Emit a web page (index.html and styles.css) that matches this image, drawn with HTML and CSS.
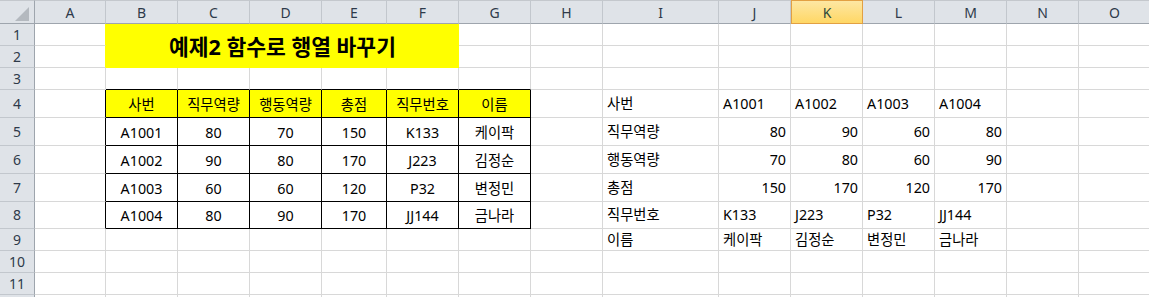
FILE: index.html
```html
<!DOCTYPE html>
<html lang="ko">
<head>
<meta charset="utf-8">
<title>예제2 함수로 행열 바꾸기</title>
<link rel="stylesheet" href="styles.css">
</head>
<body>
<div class="sheet">
  <!-- column headers -->
  <div class="corner"><svg width="34" height="23" viewBox="0 0 34 23"><polygon points="15,20 29,20 29,6" fill="#b4b9bf"/></svg></div>
  <div class="ch">A</div><div class="ch">B</div><div class="ch">C</div><div class="ch">D</div><div class="ch">E</div><div class="ch">F</div><div class="ch">G</div><div class="ch">H</div><div class="ch">I</div><div class="ch">J</div><div class="ch sel">K</div><div class="ch">L</div><div class="ch">M</div><div class="ch">N</div><div class="ch">O</div>

  <!-- row 1 -->
  <div class="rh">1</div>
  <div class="c fill-edge"></div>
  <div class="title">예제2 함수로 행열 바꾸기</div>
  <div class="c"></div><div class="c"></div><div class="c"></div><div class="c"></div><div class="c"></div><div class="c"></div><div class="c"></div><div class="c"></div><div class="c"></div>

  <!-- row 2 -->
  <div class="rh">2</div>
  <div class="c fill-edge"></div>
  <div class="c"></div><div class="c"></div><div class="c"></div><div class="c"></div><div class="c"></div><div class="c"></div><div class="c"></div><div class="c"></div><div class="c"></div>

  <!-- row 3 -->
  <div class="rh">3</div>
  <div class="c"></div>
  <div class="c top"></div><div class="c top"></div><div class="c top"></div><div class="c top"></div><div class="c top"></div><div class="c top"></div>
  <div class="c"></div><div class="c"></div><div class="c"></div><div class="c"></div><div class="c"></div><div class="c"></div><div class="c"></div><div class="c"></div>

  <!-- row 4 -->
  <div class="rh">4</div>
  <div class="c edge"></div>
  <div class="t th">사번</div><div class="t th">직무역량</div><div class="t th">행동역량</div><div class="t th">총점</div><div class="t th">직무번호</div><div class="t th">이름</div>
  <div class="c"></div>
  <div class="c v l">사번</div><div class="c v l">A1001</div><div class="c v l">A1002</div><div class="c v l">A1003</div><div class="c v l">A1004</div>
  <div class="c"></div><div class="c"></div>

  <!-- row 5 -->
  <div class="rh">5</div>
  <div class="c edge"></div>
  <div class="t">A1001</div><div class="t">80</div><div class="t">70</div><div class="t">150</div><div class="t">K133</div><div class="t">케이팍</div>
  <div class="c"></div>
  <div class="c v l">직무역량</div><div class="c v r">80</div><div class="c v r">90</div><div class="c v r">60</div><div class="c v r">80</div>
  <div class="c"></div><div class="c"></div>

  <!-- row 6 -->
  <div class="rh">6</div>
  <div class="c edge"></div>
  <div class="t">A1002</div><div class="t">90</div><div class="t">80</div><div class="t">170</div><div class="t">J223</div><div class="t">김정순</div>
  <div class="c"></div>
  <div class="c v l">행동역량</div><div class="c v r">70</div><div class="c v r">80</div><div class="c v r">60</div><div class="c v r">90</div>
  <div class="c"></div><div class="c"></div>

  <!-- row 7 -->
  <div class="rh">7</div>
  <div class="c edge"></div>
  <div class="t">A1003</div><div class="t">60</div><div class="t">60</div><div class="t">120</div><div class="t">P32</div><div class="t">변정민</div>
  <div class="c"></div>
  <div class="c v l">총점</div><div class="c v r">150</div><div class="c v r">170</div><div class="c v r">120</div><div class="c v r">170</div>
  <div class="c"></div><div class="c"></div>

  <!-- row 8 -->
  <div class="rh">8</div>
  <div class="c edge"></div>
  <div class="t">A1004</div><div class="t">80</div><div class="t">90</div><div class="t">170</div><div class="t">JJ144</div><div class="t">금나라</div>
  <div class="c"></div>
  <div class="c v l">직무번호</div><div class="c v l">K133</div><div class="c v l">J223</div><div class="c v l">P32</div><div class="c v l">JJ144</div>
  <div class="c"></div><div class="c"></div>

  <!-- row 9 -->
  <div class="rh">9</div>
  <div class="c"></div>
  <div class="c"></div><div class="c"></div><div class="c"></div><div class="c"></div><div class="c"></div><div class="c"></div>
  <div class="c"></div>
  <div class="c v l">이름</div><div class="c v l">케이팍</div><div class="c v l">김정순</div><div class="c v l">변정민</div><div class="c v l">금나라</div>
  <div class="c"></div><div class="c"></div>

  <!-- row 10 -->
  <div class="rh">10</div>
  <div class="c"></div><div class="c"></div><div class="c"></div><div class="c"></div><div class="c"></div><div class="c"></div><div class="c"></div><div class="c"></div><div class="c"></div><div class="c"></div><div class="c"></div><div class="c"></div><div class="c"></div><div class="c"></div><div class="c"></div>

  <!-- row 11 -->
  <div class="rh">11</div>
  <div class="c"></div><div class="c"></div><div class="c"></div><div class="c"></div><div class="c"></div><div class="c"></div><div class="c"></div><div class="c"></div><div class="c"></div><div class="c"></div><div class="c"></div><div class="c"></div><div class="c"></div><div class="c"></div><div class="c"></div>

  <!-- row 12: only its top edge is in view -->
  <div class="rh"></div>
  <div class="c"></div><div class="c"></div><div class="c"></div><div class="c"></div><div class="c"></div><div class="c"></div><div class="c"></div><div class="c"></div><div class="c"></div><div class="c"></div><div class="c"></div><div class="c"></div><div class="c"></div><div class="c"></div><div class="c"></div>
</div>
</body>
</html>
```

FILE: styles.css
```css
html, body {
  margin: 0;
  padding: 0;
  overflow: hidden;
  background: #ffffff;
}

.sheet {
  display: grid;
  grid-template-columns: 35px 71px 72px 72px 72px 65px 72px 72px 72px 116px 72px 72px 72px 72px 72px 72px;
  grid-template-rows: 24px 22px 22px 22px 28px 28px 28px 28px 27px 22px 22px 22px 22px;
  width: 1179px;
  font-family: "Noto Sans", "Noto Sans CJK KR", sans-serif;
  font-size: 14.3px;
  line-height: 1;
  color: #000000;
}

.sheet > div {
  box-sizing: border-box;
  display: flex;
  align-items: center;
  justify-content: center;
  white-space: nowrap;
  overflow: hidden;
}

/* headers */
.corner {
  background: #dfe3e8;
  border-top: 1px solid #c4c8cd;
  border-right: 1px solid #9ea5ad;
  border-bottom: 1px solid #9ea5ad;
  padding: 0;
}
.corner svg { display: block; }

.ch {
  background: #dfe3e8;
  border-top: 1px solid #c4c8cd;
  border-right: 1px solid #c2c7cd;
  border-bottom: 1px solid #9ea5ad;
  color: #2e3a4a;
  font-size: 14px;
  padding-top: 1px;
}
.ch.sel {
  background: linear-gradient(#fde7a3, #ffd765);
  border: 1px solid #e2a043;
  color: #2b4a3c;
}

.rh {
  background: #dfe3e8;
  border-right: 1px solid #9ea5ad;
  border-bottom: 1px solid #c2c7cd;
  color: #2e3a4a;
  font-size: 14px;
}

/* plain cells */
.c {
  border-right: 1px solid #d8d8d8;
  border-bottom: 1px solid #d8d8d8;
}
.c.v { align-items: center; padding-top: 1px; }
.c.l { justify-content: flex-start; padding-left: 4px; }
.c.r { justify-content: flex-end; padding-right: 4px; }

/* merged title B1:F2 */
.title {
  grid-column: span 5;
  grid-row: span 2;
  background: #ffff00;
  font-size: 21.5px;
  font-weight: 700;
  padding-top: 2px;
}
.c.fill-edge { border-right-color: #ffff00; }

/* bordered source table B4:G8 */
.c.edge { border-right-color: #000000; }
.c.top { border-bottom-color: #000000; }
.t {
  border-right: 1px solid #000000;
  border-bottom: 1px solid #000000;
  align-items: flex-end !important;
  padding-bottom: 5px;
}
.t.th { background: #ffff00; }
```
